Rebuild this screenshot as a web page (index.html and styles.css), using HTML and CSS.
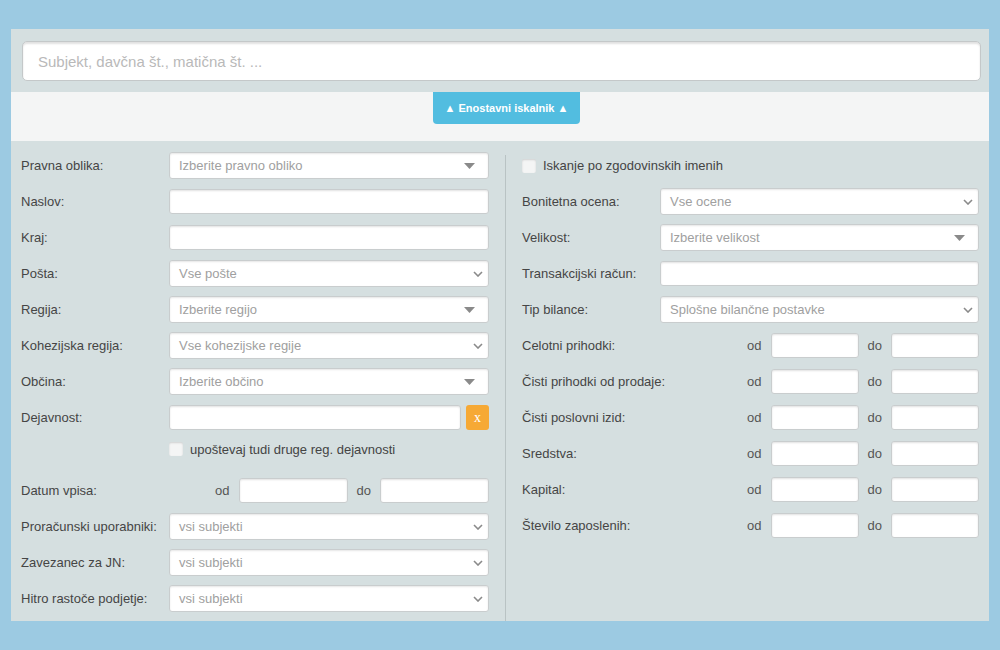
FILE: index.html
```html
<!DOCTYPE html>
<html lang="sl">
<head>
    <meta charset="UTF-8">
    <meta name="viewport" content="width=device-width, initial-scale=1.0">
    <title>Iskalnik</title>
    <link rel="stylesheet" href="styles.css">
</head>
<body>
    <div class="panel">
        <div class="search">
            <input type="text" class="search-input" placeholder="Subjekt, davčna št., matična št. ...">
        </div>
        <div class="toggle-bar">
            <button type="button" class="toggle">▲ Enostavni iskalnik ▲</button>
        </div>

        <div class="form">
            <div class="col col-left">
                <div class="row">
                    <label>Pravna oblika:</label>
                    <div class="select chosen"><span>Izberite pravno obliko</span><svg width="11" height="6" viewBox="0 0 11 6"><path d="M0 0h11L5.5 6z" fill="#8a8a8a"/></svg></div>
                </div>
                <div class="row">
                    <label>Naslov:</label>
                    <input type="text" class="text">
                </div>
                <div class="row">
                    <label>Kraj:</label>
                    <input type="text" class="text">
                </div>
                <div class="row">
                    <label>Pošta:</label>
                    <div class="select"><span>Vse pošte</span><svg width="10" height="6" viewBox="0 0 10 6"><path d="M1 1l4 4 4-4" fill="none" stroke="#8a8a8a" stroke-width="1.6"/></svg></div>
                </div>
                <div class="row">
                    <label>Regija:</label>
                    <div class="select chosen"><span>Izberite regijo</span><svg width="11" height="6" viewBox="0 0 11 6"><path d="M0 0h11L5.5 6z" fill="#8a8a8a"/></svg></div>
                </div>
                <div class="row">
                    <label>Kohezijska regija:</label>
                    <div class="select"><span>Vse kohezijske regije</span><svg width="10" height="6" viewBox="0 0 10 6"><path d="M1 1l4 4 4-4" fill="none" stroke="#8a8a8a" stroke-width="1.6"/></svg></div>
                </div>
                <div class="row">
                    <label>Občina:</label>
                    <div class="select chosen"><span>Izberite občino</span><svg width="11" height="6" viewBox="0 0 11 6"><path d="M0 0h11L5.5 6z" fill="#8a8a8a"/></svg></div>
                </div>
                <div class="row">
                    <label>Dejavnost:</label>
                    <div class="field-clear">
                        <input type="text" class="text">
                        <button type="button" class="clear">x</button>
                    </div>
                </div>
                <div class="row row-check">
                    <label></label>
                    <div class="check"><span class="box"></span>upoštevaj tudi druge reg. dejavnosti</div>
                </div>
                <div class="row">
                    <label>Datum vpisa:</label>
                    <div class="range">
                        <span>od</span><input type="text" class="text">
                        <span>do</span><input type="text" class="text">
                    </div>
                </div>
                <div class="row">
                    <label>Proračunski uporabniki:</label>
                    <div class="select"><span>vsi subjekti</span><svg width="10" height="6" viewBox="0 0 10 6"><path d="M1 1l4 4 4-4" fill="none" stroke="#8a8a8a" stroke-width="1.6"/></svg></div>
                </div>
                <div class="row">
                    <label>Zavezanec za JN:</label>
                    <div class="select"><span>vsi subjekti</span><svg width="10" height="6" viewBox="0 0 10 6"><path d="M1 1l4 4 4-4" fill="none" stroke="#8a8a8a" stroke-width="1.6"/></svg></div>
                </div>
                <div class="row">
                    <label>Hitro rastoče podjetje:</label>
                    <div class="select"><span>vsi subjekti</span><svg width="10" height="6" viewBox="0 0 10 6"><path d="M1 1l4 4 4-4" fill="none" stroke="#8a8a8a" stroke-width="1.6"/></svg></div>
                </div>
            </div>

            <div class="col col-right">
                <div class="row">
                    <div class="check"><span class="box"></span>Iskanje po zgodovinskih imenih</div>
                </div>
                <div class="row">
                    <label>Bonitetna ocena:</label>
                    <div class="select"><span>Vse ocene</span><svg width="10" height="6" viewBox="0 0 10 6"><path d="M1 1l4 4 4-4" fill="none" stroke="#8a8a8a" stroke-width="1.6"/></svg></div>
                </div>
                <div class="row">
                    <label>Velikost:</label>
                    <div class="select chosen"><span>Izberite velikost</span><svg width="11" height="6" viewBox="0 0 11 6"><path d="M0 0h11L5.5 6z" fill="#8a8a8a"/></svg></div>
                </div>
                <div class="row">
                    <label>Transakcijski račun:</label>
                    <input type="text" class="text">
                </div>
                <div class="row">
                    <label>Tip bilance:</label>
                    <div class="select"><span>Splošne bilančne postavke</span><svg width="10" height="6" viewBox="0 0 10 6"><path d="M1 1l4 4 4-4" fill="none" stroke="#8a8a8a" stroke-width="1.6"/></svg></div>
                </div>
                <div class="row">
                    <label>Celotni prihodki:</label>
                    <div class="range"><span>od</span><input type="text" class="text"><span>do</span><input type="text" class="text"></div>
                </div>
                <div class="row">
                    <label>Čisti prihodki od prodaje:</label>
                    <div class="range"><span>od</span><input type="text" class="text"><span>do</span><input type="text" class="text"></div>
                </div>
                <div class="row">
                    <label>Čisti poslovni izid:</label>
                    <div class="range"><span>od</span><input type="text" class="text"><span>do</span><input type="text" class="text"></div>
                </div>
                <div class="row">
                    <label>Sredstva:</label>
                    <div class="range"><span>od</span><input type="text" class="text"><span>do</span><input type="text" class="text"></div>
                </div>
                <div class="row">
                    <label>Kapital:</label>
                    <div class="range"><span>od</span><input type="text" class="text"><span>do</span><input type="text" class="text"></div>
                </div>
                <div class="row">
                    <label>Število zaposlenih:</label>
                    <div class="range"><span>od</span><input type="text" class="text"><span>do</span><input type="text" class="text"></div>
                </div>
            </div>
        </div>
    </div>
</body>
</html>
```

FILE: styles.css
```css
* { box-sizing: border-box; }
body { margin: 0; background: #9ccae2; font-family: "Liberation Sans", Arial, sans-serif; font-size: 13px; color: #454545; }

.panel { margin: 29px 11px 0 11px; width: 978px; background: #d5dfe0; }

.search { padding: 12px 8px 11px 11px; }
.search-input { display: block; width: 100%; height: 40px; padding: 0 15px; border: 1px solid #c4c8c9; border-radius: 5px; background: #fff; box-shadow: inset 0 2px 2px rgba(0,0,0,.12); font-family: inherit; font-size: 15px; color: #555; outline: none; }
.search-input::placeholder { color: #b9b9b9; }

.toggle-bar { background: #f4f5f5; height: 49px; display: flex; justify-content: center; padding-left: 13px; }
.toggle { height: 32px; padding: 0 12px; border: none; border-radius: 0 0 4px 4px; background: #52bde0; color: #fff; font-family: inherit; font-size: 11px; font-weight: bold; cursor: pointer; }

.form { display: flex; padding-top: 11px; }
.col-left { width: 494px; padding: 0 16px 0 10px; }
.col-right { width: 484px; padding: 0 10px 0 16px; border-left: 1px solid #b9c3c4; margin-top: 3px; }
.col-right .row:first-child { margin-top: -3px; }

.row { display: flex; align-items: center; height: 27px; margin-bottom: 9px; }
.row label { flex: none; width: 148px; white-space: nowrap; }
.col-right .row label { width: 138px; }
.row-check { height: 18px; margin-bottom: 19px; }

.text { flex: 1; min-width: 0; height: 25px; border: 1px solid #c9cdce; border-radius: 3px; background: #fff; box-shadow: inset 0 1px 2px rgba(0,0,0,.12); font-family: inherit; font-size: 13px; outline: none; }

.select { flex: 1; height: 27px; display: flex; align-items: center; justify-content: space-between; padding: 0 5px 0 9px; border: 1px solid #c9cdce; border-radius: 3px; background: #fff; box-shadow: inset 0 1px 2px rgba(0,0,0,.1); color: #a0a0a0; }
.select.chosen { padding-right: 13px; }

.field-clear { flex: 1; display: flex; align-items: center; gap: 5px; }
.clear { width: 23px; height: 25px; border: none; border-radius: 3px; background: #f6a935; color: #fff; font-family: "Liberation Serif", serif; font-size: 14px; padding: 0; }

.check { display: flex; align-items: center; gap: 7px; color: #444; white-space: nowrap; }
.box { width: 14px; height: 14px; border-radius: 2px; background: #f4f5f5; box-shadow: inset 0 1px 2px rgba(0,0,0,.15); }

.range { flex: 1; display: flex; align-items: center; justify-content: flex-end; gap: 9px; }
.range span { color: #555; }
.range .text { flex: none; width: 109px; }
.col-right .range .text { width: 88px; }
```
